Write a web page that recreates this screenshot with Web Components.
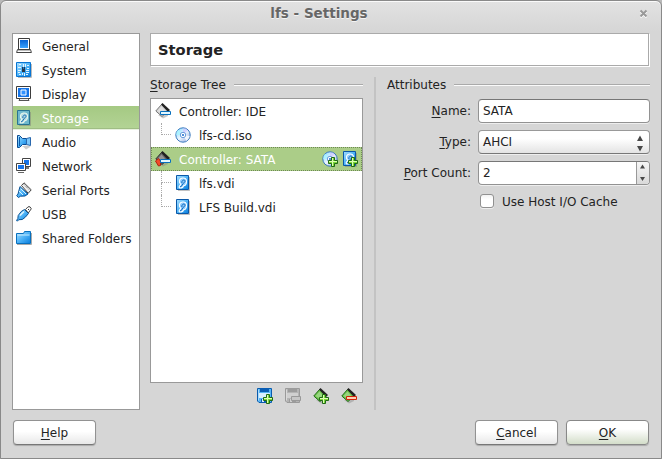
<!DOCTYPE html>
<html lang="en">
<head>
<meta charset="utf-8">
<title>lfs - Settings</title>
<style>
html, body { margin: 0; height: 100%; background: #b9b9b9; overflow: hidden; }
body { font: 12px/24px "DejaVu Sans", sans-serif; color: #232323; }
</style>
</head>
<body>
<settings-window></settings-window>
<script>
const underline = 'u{text-decoration-thickness:1px;text-underline-offset:2px;text-decoration-skip-ink:none}';

function define(name, css, html, setup) {
  const template = document.createElement('template');
  template.innerHTML = `<style>*{box-sizing:border-box}${underline}${css}</style>${html}`;
  customElements.define(name, class extends HTMLElement {
    constructor() {
      super();
      this.attachShadow({ mode: 'open' }).appendChild(template.content.cloneNode(true));
    }
    connectedCallback() { if (setup) setup(this, this.shadowRoot); }
  });
}

/* Icons, all on a 16 x 16 grid */
const plus = '<path d="M9.500 6.500h3v3h3v3h-3v3h-3v-3h-3v-3h3z" fill="#7fd83a" stroke="#1f6b14"/><path d="M10.500 15v-4.500H7M10.500 7v3.500h4.500" fill="none" stroke="#dcffb4"/>';
const disk = '<path d="M1.500.5h12v14h-12z" fill="url(#b)" stroke="#0a58a8"/><path d="M14.500 2v13.500H3" fill="none" stroke="#777" stroke-opacity=".45"/><path d="M4.500 7.500Q4 3.500 7.500 3q4-.5 4 3.500 0 4-3 4.300Q8 13 5 13q-1.500-.5-.5-2Q6.500 9.500 4.500 7.500z" fill="#8dccff" stroke="#fff" stroke-width="1.100"/><path d="M6.800 8C6.600 5 9.500 4.200 10 5.700S8.500 8 8 8.500Q7.500 11 5 12" fill="none" stroke="#075db0" stroke-width=".9"/>';
const cd = '<circle cx="8" cy="8" r="7.200" fill="url(#c)" stroke="#3b79bd"/><path d="M8 8L3 2.500Q1 5 1.200 8z" fill="#a9f4ff" opacity=".8"/><path d="M8 8l6.800 1Q14 12 11.500 14z" fill="#fff" opacity=".8"/><path d="M8 8L13 3.500Q11 1 8 1.300z" fill="#c8b9ff" opacity=".55"/><circle cx="8" cy="8" r="2.700" fill="#fff" stroke="#6a9cdd"/><circle cx="8" cy="8" r="1.100" fill="#2773cf"/>';
const controller = (tint, edge, top = '#222') => `<path d="M3 12l5 3.500 5-2.500v-2z" fill="#888" opacity=".45"/><path d="M6.500 1.500l7 6-6.500 6L.8 8z" fill="${tint}" stroke="${edge}"/><path d="M6 1.500L7.500 0 15 7l-2 2z" fill="${top}"/><path d="M2.500 8l4-4.500 3.500 4-3.500 3z" fill="#fff" opacity=".3"/>`;
const minus = (fill, edge) => `<path d="M5.500 8.500h10v3h-10z" fill="${fill}" stroke="${edge}"/>`;
const floppy = (fill, edge, dark, label) => `<path d="M.5.5h14v14H2L.5 13z" fill="${fill}" stroke="${edge}"/><path d="M3 0h9v4H3z" fill="${dark}"/><path d="M2 5h11v5H2z" fill="${label}"/><path d="M4 11h7v3H4z" fill="${dark}"/><path d="M5 11h2v3H5z" fill="${label}"/><path d="M1.500 1.500v11" stroke="#fff" stroke-opacity=".5"/>`;
const icons = {
  general: '<path d="M2.500.500h11v11h-11z" fill="#fff" stroke="#3b3b3b"/><path d="M4 2h8v8H4z" fill="url(#d)"/><path d="M1.500 11.500h13l.9 3H.6z" fill="#fff" stroke="#444"/><path d="M2 12.500h12" stroke="#bbb"/>',
  system: '<path d="M.5.500h14v14H.5z" fill="url(#b)" stroke="#0875d3"/><path d="M15.500 2v13.500H2" fill="none" stroke="#bbb"/><path d="M3 2h2v1H3zM7 2h1v3H7zM9 2h1v3H9zM2 5h3v1H2zM2 8h3v1H2zM2 10h2v1H2zM11 3h2v1h-2zM11 6h2v1h-2zM10 8h3v1h-3zM10 10h3v1h-3zM6 11h1v2H6zM8 11h1v3H8zM3 12h2v1H3zM10 12h2v1h-2z" fill="#e4f5ff"/><path d="M6 5h3v5H6z" fill="#293849"/><path d="M7 5h1v2H7z" fill="#0e75d3"/>',
  display: '<path d="M.5.500h14v12H.5z" fill="#fff" stroke="#3d3d3d"/><path d="M2 2h11v9H2z" fill="#1675e8"/><path d="M5 4h5v5H5z" fill="#3292ff" stroke="#fff"/><path d="M4 12.500h8l1 2H3z" fill="#eee" stroke="#555"/>',
  disk, cd,
  diskSelected: disk.replaceAll('#0a58a8', '#287493').replaceAll('url(#b)', '#6fb8cd').replaceAll('#8dccff', '#b4dce0').replaceAll('#fff', '#e8f6ee'),
  audio: '<path d="M3 12.500h4l3 3 5-3-4-1z" fill="#999" opacity=".5"/><path d="M1.500 1.500h2l3 3h4v6h-4l-3 3h-2z" fill="url(#b)" stroke="#0b4b91"/><path d="M3.500 3v9" stroke="#0b5cae"/><path d="M10.500 4.500l4-1v8l-4-1z" fill="#7cc6fa" stroke="#2a68ad"/>',
  network: '<path d="M6.500.500h8v8h-8z" fill="#fff" stroke="#444"/><path d="M8 2h5v5H8z" fill="#1774e8"/><path d="M10 9h3v2h-3z" fill="#777"/><path d="M.5 5.500h9v7h-9z" fill="#fff" stroke="#444"/><path d="M2 7h6v4H2z" fill="#1774e8"/><path d="M2 14.500h6" stroke="#666"/>',
  serial: '<path d="M5.500 3.500L8 .8l7.200 7-3 3.500z" fill="#eee" stroke="#444"/><path d="M8 2.500l5.500 5.500" stroke="#555" stroke-dasharray="1 1"/><path d="M4 4.500l8 7.500-3 2-4.500.2-2 1.300-1.800-1.700L2 12z" fill="url(#b)" stroke="#0b5294"/><path d="M5 7l5 5M3 9l4 4" stroke="#d7f3ff"/>',
  usb: '<path d="M9.500 3.500L12 .8h2l1.300 2-3 4.200z" fill="#fff" stroke="#444"/><path d="M12 3l1 1" stroke="#333"/><path d="M8.500 3.500l4 4-3.200 3.700-3 2.300-3.500.2-1.500 1.500-.8-.8 1.300-1.700.4-3.200 3-4z" fill="url(#b)" stroke="#0b5294"/><path d="M4 9.500l4-4" stroke="#e4f7ff" stroke-width="1.500"/>',
  folder: '<path d="M.5 13.500v-10h7l1-2h6v12z" fill="url(#b)" stroke="#0870be"/><path d="M1.500 5h12" stroke="#c8edff"/><path d="M15.500 3v11.500H1" fill="none" stroke="#aaa"/>',
  ide: controller('#d2d2d2', '#777') + minus('#e4f7ff', '#0870be'),
  sata: controller('#666', '#333') + '<path d="M.5 10l3-2.500 2 2.500v4.500l-2 .5z" fill="#f04a2a" stroke="#b02010"/>' + minus('#e4f7ff', '#0870be'),
  addCd: cd + plus, addDisk: disk + plus,
  save: floppy('#55b4f4', '#0a5cae', '#0a5db4', '#d8efff') + plus,
  saveOff: floppy('#b4b4b4', '#9a9a9a', '#9c9c9c', '#d0d0d0') + '<path d="M6.500 8.500h9v4h-9z" fill="#c6c6c6" stroke="#999"/>',
  addController: controller('#6cc44a', '#226b18') + plus,
  removeController: controller('#6cc44a', '#226b18') + minus('#ffd0b4', '#d02508')
};
const defs = '<defs><linearGradient id="b" x2="1" y2="1"><stop stop-color="#a7dfff"/><stop offset=".5" stop-color="#4eb3f7"/><stop offset="1" stop-color="#087ddd"/></linearGradient><linearGradient id="c" x2="1" y2="1"><stop stop-color="#78d8ff"/><stop offset=".5" stop-color="#edf6ff"/><stop offset="1" stop-color="#829cdb"/></linearGradient><linearGradient id="d" x2="0" y2="1"><stop stop-color="#0863d4"/><stop offset="1" stop-color="#3aa3ff"/></linearGradient></defs>';

customElements.define('ui-icon', class extends HTMLElement {
  static observedAttributes = ['name'];
  constructor() {
    super();
    this.attachShadow({ mode: 'open' });
  }
  attributeChangedCallback(attribute, previous, name) {
    this.shadowRoot.innerHTML = `<style>:host{display:block;flex:none;width:16px;height:16px}svg{display:block}</style><svg width="16" height="16" viewBox="0 0 16 16">${defs}${icons[name]}</svg>`;
  }
});

define('title-bar', `:host{display:grid;grid-template-columns:26px 1fr 26px;height:31px;padding-top:1px;align-items:start}
  h1{grid-column:2;margin:0;text-align:center;font:bold 13.5px/23px "DejaVu Sans",sans-serif;color:#666;text-shadow:0 1px #f4f4f4;padding-right:24px}
  svg{margin:7px 0 0 4px}`,
  '<h1><slot></slot></h1><svg width="10" height="10"><path d="M1.500 2.500l6 6M7.500 2.500l-6 6" stroke="#fff" stroke-width="2"/><path d="M1.500 1.500l6 6M7.500 1.500l-6 6" stroke="#999" stroke-width="2"/></svg>');

define('nav-item', `:host{display:flex;align-items:center;height:24px;padding-left:3px;gap:10px}span{padding-top:2px;line-height:24px}
  :host([selected]){background:linear-gradient(#a5c983,#b2d394 90%,#9fbd84 92%,#9fbd84 95%,#e8f1df 96%);color:#fff}`,
  '<ui-icon></ui-icon><span><slot></slot></span>',
  (host, root) => root.querySelector('ui-icon').setAttribute('name', host.getAttribute('icon')));

define('side-nav', ':host{display:block;width:128px;background:#fff;border:1px solid #999}', '<slot></slot>');

define('group-title', ':host{display:flex;align-items:center;gap:8px;height:16px;line-height:16px}i{flex:1;height:2px;background:linear-gradient(#aaa 50%,#fafafa 50%)}',
  '<span><slot></slot></span><i></i>');

define('tree-row', `:host{display:flex;align-items:center;height:24px;padding:0 4px 0 4px;gap:8px;position:relative}
  :host([child]){padding-left:24px}
  :host([selected]){background:#abcd88;color:#fff;outline:1px dotted #6e8954;outline-offset:-1px}
  span{flex:1;padding-top:2px;line-height:24px}.line{display:none;position:absolute;left:10px;top:0;width:10px;height:12px;border:dotted #aaa;border-width:0 0 1px 1px}
  .down{display:none;position:absolute;left:10px;top:12px;height:12px;border-left:1px dotted #aaa}
  :host([child]) .line,:host([child][more]) .down{display:block}
  .tools{display:flex;gap:4px}`,
  '<i class="line"></i><i class="down"></i><slot name="icon"></slot><span><slot></slot></span><div class="tools"><slot name="tool"></slot></div>');

define('storage-tree', ':host{display:block;height:285px;width:213px;background:#fff;border:1px solid #999}', '<slot></slot>');

define('form-row', ':host{display:grid;grid-template-columns:84px 172px;gap:7px;height:31px}label{text-align:right;line-height:24px}',
  '<label><slot name="label"></slot></label><slot></slot>');

define('value-field', `:host{display:flex;height:24px;border:1px solid #929292;border-top-color:#777;border-radius:4px;background:#fff;line-height:23px;box-shadow:0 1px #eee;overflow:hidden}
  .value{flex:1;padding-left:4px}svg{display:none}
  :host([kind=select]){background:linear-gradient(#fff 35%,#e3e3e3);border-color:#999;border-bottom-color:#777}
  :host([kind=select]) .combo,:host([kind=spin]) .spin{display:block}
  .spin{background:linear-gradient(#f6f6f6,#d9d9d9);border-left:1px solid #999}`,
  `<div class="value"><slot></slot></div>
  <svg class="combo" width="14" height="22"><path d="M5 4.500l3 5.500H2zM5 20.500l3-5.500H2z" fill="#484848"/></svg>
  <svg class="spin" width="13" height="22"><path d="M5.500 2.500L8 6.500H3zM5.500 19L8 15H3z" fill="#484848"/></svg>`);

define('check-option', ':host{display:flex;gap:8px;align-items:center;padding-left:93px;height:17px}span{padding-top:2px}i{width:14px;height:14px;border:1px solid #919191;border-radius:3px;background:linear-gradient(#f2f2f2,#fff 35%);box-shadow:0 1px #eee}', '<i></i><span><slot></slot></span>');

define('push-button', `:host{display:block;width:83px;height:25px;text-align:center;line-height:24px;border:1px solid #929292;border-bottom-color:#777;border-radius:4px;background:linear-gradient(#fff 45%,#e8e8e8);box-shadow:0 1px 1px #aaa}
  :host([primary]){background:linear-gradient(#fff 35%,#d3ddc9);border-color:#888}`, '<slot></slot>');

define('settings-window', `:host{display:flex;flex-direction:column;width:662px;height:459px;border:1px solid #898989;border-radius:6px 6px 0 0;background:linear-gradient(#e2e2e2,#d6d6d6 30px);box-shadow:inset 0 1px #fafafa;box-sizing:border-box}
  .main{display:grid;grid-template-columns:128px 500px;gap:10px;height:377px;margin:1px 0 0 11px}
  .page{display:flex;flex-direction:column}
  h2{height:33px;margin:0 1px 10px 0;background:#fff;border:1px solid #aaa;box-shadow:1px 1px #fff;font:bold 14.67px/31px "DejaVu Sans",sans-serif;padding-left:7px}
  .cols{display:grid;grid-template-columns:213px 2px 263px;column-gap:11px}
  .sep{background:#c3c3c3;height:333px;margin-top:1px}
  storage-tree{margin-top:5px}.cols group-title{margin-top:1px}
  .tools{display:flex;gap:12px;padding:5px 0 0 107px}
  .form{padding-top:6px}
  .buttons{display:flex;gap:8px;margin:10px 12px 0}.fill{flex:1}`,
  `<title-bar>lfs - Settings</title-bar>
  <div class="main">
    <side-nav>
      <nav-item icon="general">General</nav-item><nav-item icon="system">System</nav-item><nav-item icon="display">Display</nav-item>
      <nav-item icon="diskSelected" selected>Storage</nav-item><nav-item icon="audio">Audio</nav-item><nav-item icon="network">Network</nav-item>
      <nav-item icon="serial">Serial Ports</nav-item><nav-item icon="usb">USB</nav-item><nav-item icon="folder">Shared Folders</nav-item>
    </side-nav>
    <div class="page">
      <h2>Storage</h2>
      <div class="cols">
        <section><group-title><u>S</u>torage Tree</group-title>
          <storage-tree>
            <tree-row><ui-icon slot="icon" name="ide"></ui-icon>Controller: IDE</tree-row>
            <tree-row child><ui-icon slot="icon" name="cd"></ui-icon>lfs-cd.iso</tree-row>
            <tree-row selected><ui-icon slot="icon" name="sata"></ui-icon>Controller: SATA<ui-icon slot="tool" name="addCd"></ui-icon><ui-icon slot="tool" name="addDisk"></ui-icon></tree-row>
            <tree-row child more><ui-icon slot="icon" name="disk"></ui-icon>lfs.vdi</tree-row>
            <tree-row child><ui-icon slot="icon" name="disk"></ui-icon>LFS Build.vdi</tree-row>
          </storage-tree>
          <div class="tools"><ui-icon name="save"></ui-icon><ui-icon name="saveOff"></ui-icon><ui-icon name="addController"></ui-icon><ui-icon name="removeController"></ui-icon></div>
        </section>
        <div class="sep"></div>
        <section><group-title>Attributes</group-title>
          <div class="form">
            <form-row><span slot="label"><u>N</u>ame:</span><value-field>SATA</value-field></form-row>
            <form-row><span slot="label"><u>T</u>ype:</span><value-field kind="select">AHCI</value-field></form-row>
            <form-row><span slot="label"><u>P</u>ort Count:</span><value-field kind="spin">2</value-field></form-row>
            <check-option>Use Host I/O Cache</check-option>
          </div>
        </section>
      </div>
    </div>
  </div>
  <div class="buttons"><push-button><u>H</u>elp</push-button><div class="fill"></div><push-button><u>C</u>ancel</push-button><push-button primary><u>O</u>K</push-button></div>`);
</script>
</body>
</html>
